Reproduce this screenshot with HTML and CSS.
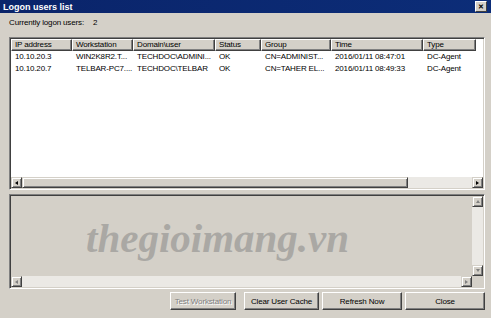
FILE: index.html
```html
<!DOCTYPE html>
<html lang="en">
<head>
    <meta charset="UTF-8">
    <meta name="viewport" content="width=device-width, initial-scale=1.0">
    <title>Logon users list</title>
    <link rel="stylesheet" href="styles.css">
</head>
<body>
    <div class="window">
        <div class="titlebar">
            <span class="title">Logon users list</span>
            <span class="close-btn">&#x2715;</span>
        </div>
        <div class="content">
            <div class="count">
                <span>Currently logon users:</span>
                <span class="count-value">2</span>
            </div>

            <div class="listview">
                <div class="lv-header">
                    <div class="col">IP address</div>
                    <div class="col">Workstation</div>
                    <div class="col">Domain\user</div>
                    <div class="col">Status</div>
                    <div class="col">Group</div>
                    <div class="col">Time</div>
                    <div class="col">Type</div>
                </div>
                <div class="lv-body">
                    <div class="lv-row">
                        <div class="cell">10.10.20.3</div>
                        <div class="cell">WIN2K8R2.T...</div>
                        <div class="cell">TECHDOC\ADMINI...</div>
                        <div class="cell">OK</div>
                        <div class="cell">CN=ADMINIST...</div>
                        <div class="cell">2016/01/11 08:47:01</div>
                        <div class="cell">DC-Agent</div>
                    </div>
                    <div class="lv-row">
                        <div class="cell">10.10.20.7</div>
                        <div class="cell">TELBAR-PC7....</div>
                        <div class="cell">TECHDOC\TELBAR</div>
                        <div class="cell">OK</div>
                        <div class="cell">CN=TAHER EL...</div>
                        <div class="cell">2016/01/11 08:49:33</div>
                        <div class="cell">DC-Agent</div>
                    </div>
                </div>
                <div class="hscroll">
                    <div class="sb-btn"><i class="arrow left"></i></div>
                    <div class="thumb"></div>
                    <div class="track"></div>
                    <div class="sb-btn"><i class="arrow right"></i></div>
                </div>
            </div>

            <div class="detail">
                <div class="detail-main">
                    <div class="detail-area"></div>
                    <div class="vscroll">
                        <div class="sb-btn"><i class="arrow up off"></i></div>
                        <div class="track"></div>
                        <div class="sb-btn"><i class="arrow down off"></i></div>
                    </div>
                </div>
                <div class="hscroll">
                    <div class="sb-btn"><i class="arrow left off"></i></div>
                    <div class="track"></div>
                    <div class="sb-btn"><i class="arrow right off"></i></div>
                    <div class="corner"></div>
                </div>
            </div>

            <div class="buttons">
                <button class="btn btn-test" disabled>Test Workstation</button>
                <button class="btn btn-clear">Clear User Cache</button>
                <button class="btn btn-refresh">Refresh Now</button>
                <button class="btn btn-close">Close</button>
            </div>
        </div>
        <div class="watermark">thegioimang.vn</div>
    </div>
</body>
</html>
```

FILE: styles.css
```css
body {
    margin: 0;
    font-family: "Liberation Sans", Arial, sans-serif;
    font-size: 8px;
    letter-spacing: -0.15px;
    color: #000;
    background-color: #d4d0c8;
}

.window {
    position: relative;
    width: 491px;
    height: 318px;
    background-color: #d4d0c8;
    overflow: hidden;
}

.titlebar {
    height: 13px;
    background: linear-gradient(to right, #0a246a, #0c2d78);
    display: flex;
    align-items: center;
    justify-content: space-between;
    padding: 0 4px 0 3px;
}

.title {
    color: #fff;
    font-weight: bold;
    font-size: 9px;
    letter-spacing: 0;
}

.close-btn {
    width: 10px;
    height: 9px;
    background-color: #d4d0c8;
    border-top: 1px solid #fff;
    border-left: 1px solid #fff;
    border-right: 1px solid #404040;
    border-bottom: 1px solid #404040;
    font-size: 7px;
    font-weight: bold;
    line-height: 9px;
    text-align: center;
}

.content {
    padding: 0 6px 0 9px;
}

.count {
    height: 20px;
    padding-top: 4px;
    line-height: 12px;
    display: flex;
}

.count-value {
    margin-left: 9px;
}

/* list view */
.listview {
    height: 149px;
    background-color: #fff;
    border-top: 1px solid #808080;
    border-left: 1px solid #808080;
    border-right: 1px solid #fff;
    border-bottom: 1px solid #fff;
    box-shadow: inset 1px 1px 0 #404040, inset -1px -1px 0 #d4d0c8;
    padding: 1px;
    display: flex;
    flex-direction: column;
}

.lv-header {
    display: grid;
    grid-template-columns: 61px 61px 82px 46px 70px 92px 53px;
    height: 12px;
}

.lv-header .col {
    background-color: #d4d0c8;
    border-top: 1px solid #fff;
    border-left: 1px solid #fff;
    border-right: 1px solid #404040;
    border-bottom: 1px solid #404040;
    box-shadow: inset -1px -1px 0 #808080;
    padding-left: 3px;
    line-height: 10px;
    white-space: nowrap;
    overflow: hidden;
}

.lv-body {
    flex: 1;
}

.lv-row {
    display: grid;
    grid-template-columns: 61px 61px 82px 46px 70px 92px 53px;
    height: 12px;
    line-height: 12px;
}

.lv-row .cell {
    padding-left: 4px;
    white-space: nowrap;
    overflow: hidden;
}

/* scrollbars */
.hscroll {
    display: flex;
    height: 11px;
}

.vscroll {
    display: flex;
    flex-direction: column;
    width: 11px;
}

.sb-btn {
    width: 9px;
    height: 9px;
    flex: none;
    background-color: #d4d0c8;
    border-top: 1px solid #d4d0c8;
    border-left: 1px solid #d4d0c8;
    border-right: 1px solid #404040;
    border-bottom: 1px solid #404040;
    box-shadow: inset 1px 1px 0 #fff, inset -1px -1px 0 #808080;
    display: flex;
    align-items: center;
    justify-content: center;
}

.track {
    flex: 1;
    background-color: #ebe9e5;
}

.hscroll .thumb {
    width: 384px;
    background-color: #d4d0c8;
    border-top: 1px solid #d4d0c8;
    border-left: 1px solid #d4d0c8;
    border-right: 1px solid #404040;
    border-bottom: 1px solid #404040;
    box-shadow: inset 1px 1px 0 #fff, inset -1px -1px 0 #808080;
}

.corner {
    width: 11px;
    background-color: #d4d0c8;
}

.arrow {
    width: 0;
    height: 0;
    border: 2px solid transparent;
}

.arrow.left {
    border-right: 3px solid #000;
    border-left-width: 0;
}

.arrow.right {
    border-left: 3px solid #000;
    border-right-width: 0;
}

.arrow.up {
    border-bottom: 3px solid #000;
    border-top-width: 0;
}

.arrow.down {
    border-top: 3px solid #000;
    border-bottom-width: 0;
}

.arrow.off.left { border-right-color: #808080; }
.arrow.off.right { border-left-color: #808080; }
.arrow.off.up { border-bottom-color: #808080; }
.arrow.off.down { border-top-color: #808080; }

/* detail box */
.detail {
    margin-top: 4px;
    height: 91px;
    background-color: #d4d0c8;
    border-top: 1px solid #808080;
    border-left: 1px solid #808080;
    border-right: 1px solid #fff;
    border-bottom: 1px solid #fff;
    box-shadow: inset 1px 1px 0 #404040, inset -1px -1px 0 #d4d0c8;
    padding: 1px;
    display: flex;
    flex-direction: column;
}

.detail-main {
    flex: 1;
    display: flex;
}

.detail-area {
    flex: 1;
}

/* buttons */
.buttons {
    display: flex;
    justify-content: flex-end;
    gap: 3px;
    margin-top: 3px;
}

.btn {
    height: 18px;
    font-family: "Liberation Sans", Arial, sans-serif;
    font-size: 8px;
    letter-spacing: -0.15px;
    color: #000;
    background-color: #d4d0c8;
    border-top: 1px solid #fff;
    border-left: 1px solid #fff;
    border-right: 1px solid #404040;
    border-bottom: 1px solid #404040;
    box-shadow: inset -1px -1px 0 #808080;
    padding: 0;
}

.btn-test {
    width: 66px;
    margin-right: 5px;
    color: #808080;
    text-shadow: 1px 1px 0 #fff;
}

.btn-clear {
    width: 75px;
}

.btn-refresh {
    width: 80px;
}

.btn-close {
    width: 80px;
}

.watermark {
    position: absolute;
    left: 86px;
    top: 218px;
    font-family: "Liberation Serif", "Times New Roman", serif;
    font-size: 41px;
    line-height: 1;
    font-weight: bold;
    font-style: italic;
    letter-spacing: 0;
    color: #aaa8a4;
    pointer-events: none;
}
```
